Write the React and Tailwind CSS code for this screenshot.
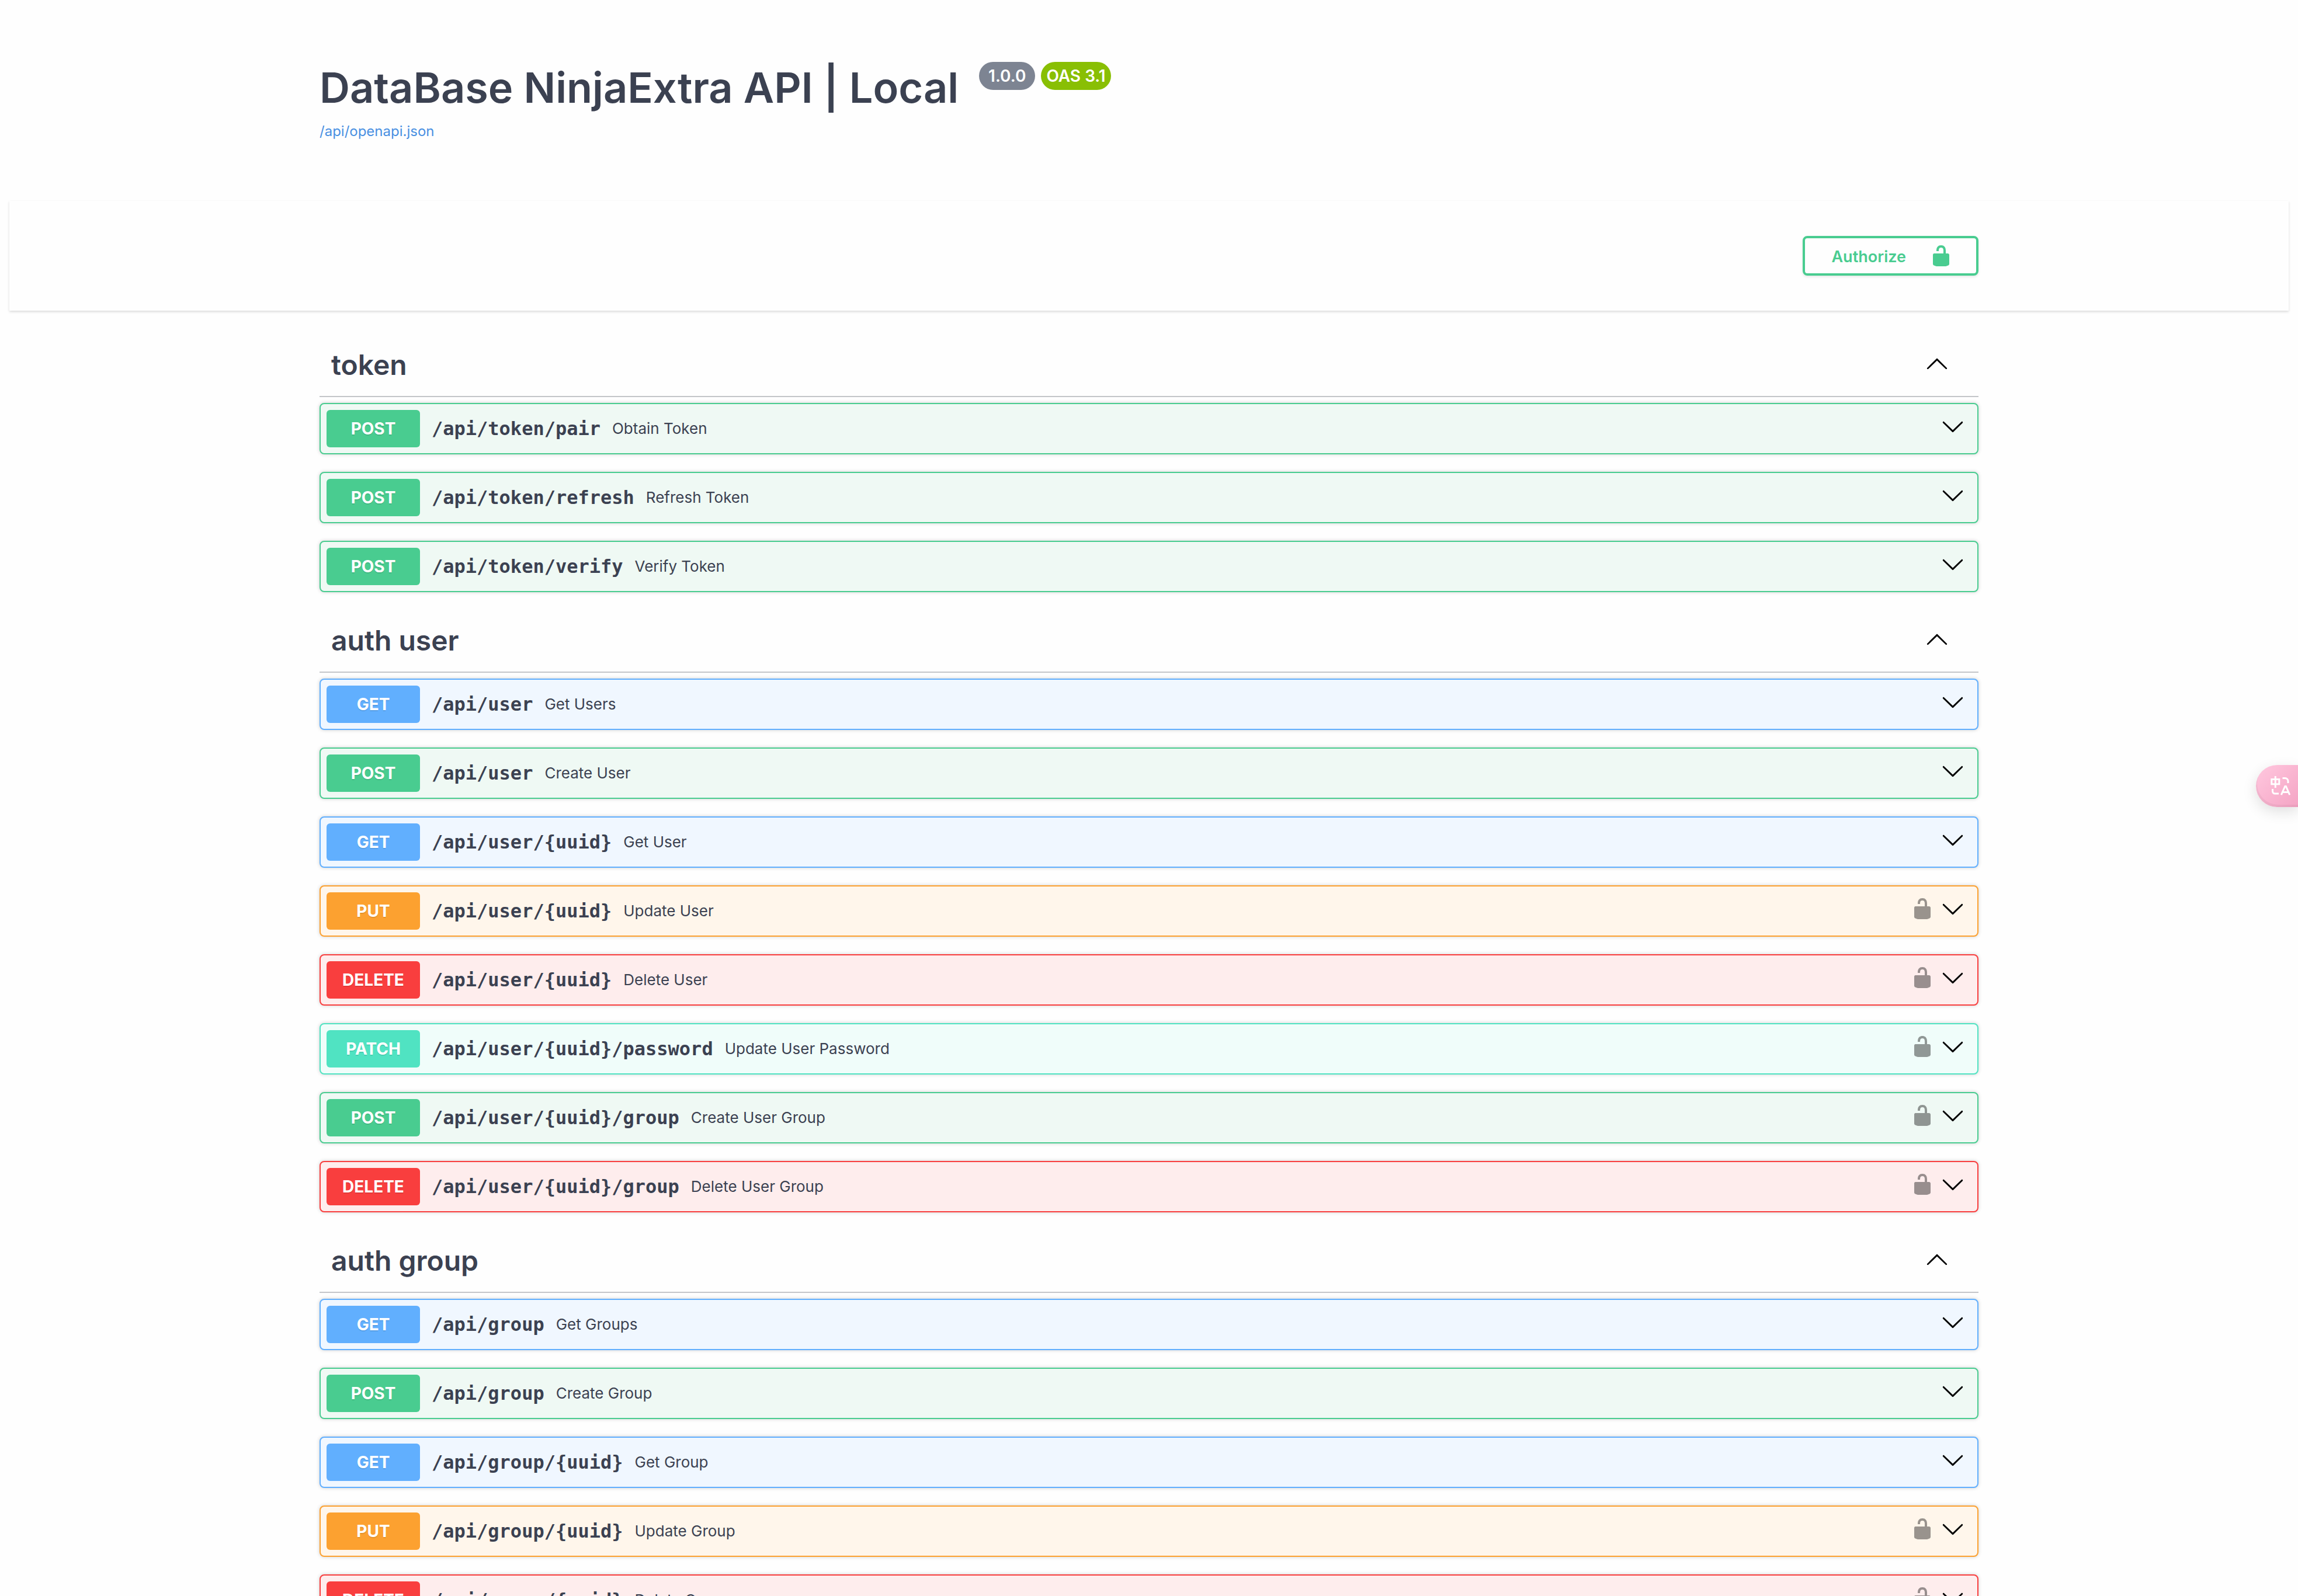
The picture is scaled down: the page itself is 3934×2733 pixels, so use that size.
import React, { useState } from "react";

const METHODS = {
  GET: { row: "border-[#61affe] bg-[#f0f7ff]", badge: "bg-[#61affe]" },
  POST: { row: "border-[#49cc90] bg-[#eff9f4]", badge: "bg-[#49cc90]" },
  PUT: { row: "border-[#fca130] bg-[#fff6eb]", badge: "bg-[#fca130]" },
  DELETE: { row: "border-[#f93e3e] bg-[#feeded]", badge: "bg-[#f93e3e]" },
  PATCH: { row: "border-[#50e3c2] bg-[#f0fdfa]", badge: "bg-[#50e3c2]" },
};

const SECTIONS = [
  {
    name: "token",
    operations: [
      ["POST", "/api/token/pair", "Obtain Token"],
      ["POST", "/api/token/refresh", "Refresh Token"],
      ["POST", "/api/token/verify", "Verify Token"],
    ],
  },
  {
    name: "auth user",
    operations: [
      ["GET", "/api/user", "Get Users"],
      ["POST", "/api/user", "Create User"],
      ["GET", "/api/user/{uuid}", "Get User"],
      ["PUT", "/api/user/{uuid}", "Update User", true],
      ["DELETE", "/api/user/{uuid}", "Delete User", true],
      ["PATCH", "/api/user/{uuid}/password", "Update User Password", true],
      ["POST", "/api/user/{uuid}/group", "Create User Group", true],
      ["DELETE", "/api/user/{uuid}/group", "Delete User Group", true],
    ],
  },
  {
    name: "auth group",
    operations: [
      ["GET", "/api/group", "Get Groups"],
      ["POST", "/api/group", "Create Group"],
      ["GET", "/api/group/{uuid}", "Get Group"],
      ["PUT", "/api/group/{uuid}", "Update Group", true],
      ["DELETE", "/api/group/{uuid}", "Delete Group", true],
    ],
  },
];

function UnlockIcon() {
  return (
    <svg viewBox="0 0 20 20" className="size-10" fill="currentColor" aria-hidden="true">
      <path d="M15.8 8H14V5.6C14 2.703 12.665 1 10 1 7.334 1 6 2.703 6 5.6V6h2v-.801C8 3.754 8.797 3 10 3c1.203 0 2 .754 2 2.199V8H4c-.553 0-1 .646-1 1.199V17c0 .549.428 1.139.951 1.307l1.197.387C5.672 18.861 6.55 19 7.1 19h5.8c.549 0 1.428-.139 1.951-.307l1.196-.387c.524-.167.953-.757.953-1.306V9.199C17 8.646 16.352 8 15.8 8z" />
    </svg>
  );
}

function ArrowDown() {
  return (
    <svg viewBox="0 0 20 20" className="size-10" fill="currentColor" aria-hidden="true">
      <path d="M17.418 6.109c.272-.268.709-.268.979 0s.271.701 0 .969l-7.908 7.83c-.27.268-.707.268-.979 0l-7.908-7.83c-.27-.268-.27-.701 0-.969.271-.268.709-.268.979 0L10 13.25l7.418-7.141z" />
    </svg>
  );
}

function ArrowUp() {
  return (
    <svg viewBox="0 0 20 20" className="size-10" fill="currentColor" aria-hidden="true">
      <path d="M17.418 14.908c.272.268.709.268.979 0s.271-.701 0-.969l-7.908-7.83c-.27-.268-.707-.268-.979 0l-7.908 7.83c-.27.268-.27.701 0 .969.271.268.709.268.979 0L10 7.767l7.418 7.141z" />
    </svg>
  );
}

function TranslateIcon() {
  return (
    <svg viewBox="0 0 36 36" className="size-9" fill="none" stroke="currentColor" strokeWidth="3" aria-hidden="true">
      <path d="M2.8 6.5h13v8.3h-13zM9.3 1v20" />
      <path d="M21.5 4.5H26a5 5 0 0 1 5 5v3.5" />
      <path d="M4.5 23v4a4 4 0 0 0 4 4H15" />
      <path d="M19.3 33.2 25.8 18.5h1.6L33.8 33.2M21.8 28.5h9.6" />
    </svg>
  );
}

function Operation({ method, path, summary, secured }) {
  const style = METHODS[method];
  return (
    <li className={`mb-[30px] flex items-center rounded-lg border-2 p-2.5 shadow-[0_0_6px_rgba(0,0,0,0.19)] ${style.row}`}>
      <button type="button" className="flex min-w-0 flex-1 items-center text-left">
        <span
          className={`w-40 shrink-0 rounded-md text-center text-[28px] leading-[64px] font-bold text-white [text-shadow:0_2px_0_rgba(0,0,0,0.1)] ${style.badge}`}
        >
          {method}
        </span>
        <span className="px-5 font-['DejaVu_Sans_Mono',monospace] text-[32px] leading-10 font-bold">{path}</span>
        <span className="text-[26px] leading-10">{summary}</span>
      </button>
      <div className="mr-3 mb-2 flex gap-3">
        {secured && (
          <button type="button" aria-label={`Authorize ${method} ${path}`} className="text-black/40">
            <UnlockIcon />
          </button>
        )}
        <button type="button" aria-label={`Expand ${method} ${path}`} className="text-black">
          <ArrowDown />
        </button>
      </div>
    </li>
  );
}

function Section({ name, operations }) {
  const [open, setOpen] = useState(true);
  return (
    <section>
      <h2 className="mb-2.5 border-b-2 border-[#3b4151]/30 pr-[51px] pl-5 text-5xl font-semibold">
        <button
          type="button"
          aria-expanded={open}
          onClick={() => setOpen(!open)}
          className="flex h-[106px] w-full items-center justify-between"
        >
          <span>{name}</span>
          <span className="mb-1.5 text-black">{open ? <ArrowUp /> : <ArrowDown />}</span>
        </button>
      </h2>
      {open && (
        <ul>
          {operations.map(([method, path, summary, secured]) => (
            <Operation key={method + path} method={method} path={path} summary={summary} secured={secured} />
          ))}
        </ul>
      )}
    </section>
  );
}

export default function App() {
  return (
    <div className="h-screen overflow-hidden bg-[#fefefe] font-['Inter',sans-serif] text-[#3b4151]">
      <header className="mx-auto max-w-[2840px] pt-[106px] pb-[105px]">
        <div className="flex items-start">
          <h1 className="mr-[35px] text-7xl leading-[88px] font-semibold">DataBase NinjaExtra API | Local</h1>
          <span className="mr-2.5 rounded-full bg-[#7d8492] px-4 text-[28px] leading-[48px] font-semibold text-white">
            1.0.0
          </span>
          <span className="rounded-full bg-[#89bf04] px-[9px] text-[28px] leading-[48px] font-semibold text-white">
            OAS 3.1
          </span>
        </div>
        <a href="#openapi" className="mt-[17px] block w-fit text-2xl leading-7 text-[#4990e2]">
          /api/openapi.json
        </a>
      </header>

      <div className="mx-4 bg-[#fefefe] py-[60px] shadow-[0_2px_4px_rgba(0,0,0,0.15)]">
        <div className="mx-auto flex max-w-[2840px] justify-end">
          <button
            type="button"
            className="flex h-[68px] items-center rounded-lg border-4 border-[#49cc90] pr-10 pl-[45px] text-[27px] font-semibold text-[#49cc90] shadow-[0_2px_4px_rgba(0,0,0,0.1)]"
          >
            <span className="mr-10 pt-1">Authorize</span>
            <UnlockIcon />
          </button>
        </div>
      </div>

      <main className="mx-auto max-w-[2840px] pt-10">
        {SECTIONS.map((section) => (
          <Section key={section.name} name={section.name} operations={section.operations} />
        ))}
      </main>

      <button
        type="button"
        aria-label="Translate page"
        className="fixed top-[1310px] right-0 flex h-[72px] w-[72px] items-center rounded-l-full bg-linear-to-br from-[#ffc8df] to-[#f4a4c4] pl-6 text-white shadow-[0_8px_24px_rgba(0,0,0,0.12),inset_2px_-4px_0_rgba(0,0,0,0.04)]"
      >
        <TranslateIcon />
      </button>
    </div>
  );
}
